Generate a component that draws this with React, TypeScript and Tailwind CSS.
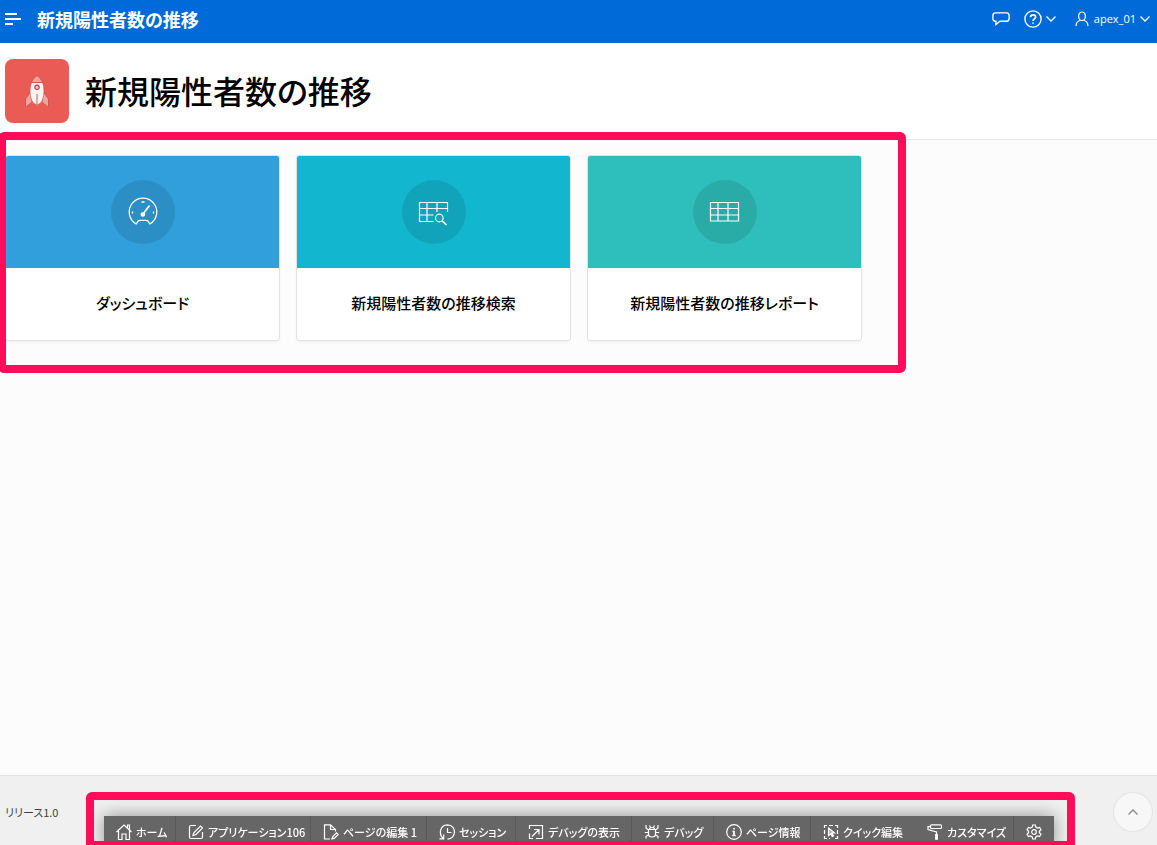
import React from 'react';

interface IconProps {
  className?: string;
}

interface CardItem {
  title: string;
  color: string;
  icon: React.ReactNode;
}

interface ToolbarItem {
  label: string;
  width: string;
  icon: React.ReactNode;
}

// Base for the 16px line icons
const LineIcon: React.FC<IconProps & { children: React.ReactNode }> = ({ className = 'size-4', children }) => (
  <svg viewBox="0 0 16 16" fill="none" stroke="currentColor" strokeWidth="1.2" className={`${className} shrink-0`} aria-hidden="true">
    {children}
  </svg>
);

const ChevronIcon = () => (
  <svg viewBox="0 0 10 6" fill="none" stroke="currentColor" strokeWidth="1.3" className="w-[10px] h-[6px] shrink-0" aria-hidden="true">
    <path d="M0.5 0.5 5 5 9.5 0.5" />
  </svg>
);

const RocketIcon = () => (
  <svg viewBox="0 0 32 40" className="w-8 h-10" aria-hidden="true">
    <path d="M9.500 21 4.500 28V35.500H5.500L10.500 31.500M22.500 21 27.500 28V35.500H26.500L21.500 31.500" fill="#f2a39f" stroke="#c14c48" strokeWidth="0.8" />
    <path d="M10.500 11.500C8.500 16.500 8.500 23.500 10.500 28.500C11.500 31.500 13.500 33.500 16 33.500C18.500 33.500 20.500 31.500 21.500 28.500C23.500 23.500 23.500 16.500 21.500 11.500Z" fill="#faf3f2" stroke="#b9514d" strokeWidth="0.6" />
    <path d="M10.500 11.500C11.500 8.500 13.500 6.200 16 4.500C18.500 6.200 20.500 8.500 21.500 11.500Z" fill="#f2a39f" stroke="#c14c48" strokeWidth="0.8" />
    <circle cx="16" cy="16.300" r="2.200" fill="#f5c5c2" stroke="#b4413e" strokeWidth="1.1" />
    <path d="M16 23V35" stroke="#e08480" strokeWidth="1.400" />
  </svg>
);

const GaugeIcon = () => (
  <svg viewBox="0 0 32 32" fill="none" stroke="currentColor" strokeWidth="1.3" className="size-8" aria-hidden="true">
    <path d="M9.200 28A13.800 13.800 0 1 1 22.800 28L20.800 25C20.300 24.500 19.700 24.300 19 24.300H13C12.300 24.300 11.700 24.500 11.200 25Z" />
    <path d="M16 18 22.500 9.500" strokeWidth="1.700" />
    <circle cx="15.800" cy="18.500" r="2.300" fill="currentColor" stroke="none" />
    <path d="M14.500 6h3M5.500 15.500v2M26.500 15.500v2" strokeWidth="1.400" />
  </svg>
);

const TableSearchIcon = () => (
  <svg viewBox="0 0 32 32" fill="none" stroke="currentColor" strokeWidth="1.200" className="size-8" aria-hidden="true">
    <path d="M15.500 25.500H1.500V6.500H29.500V16M1.500 12.500H29.500M1.500 19H15.500M9 6.500V25.500M19 6.500V16" />
    <circle cx="21.300" cy="22" r="3.800" />
    <path d="M24 24.800 28.500 29" strokeWidth="1.500" />
  </svg>
);

const TableIcon = () => (
  <svg viewBox="0 0 32 32" fill="none" stroke="currentColor" strokeWidth="1.200" className="size-8" aria-hidden="true">
    <path d="M1.500 6.500H29.500V25H1.500ZM1.500 12.500H29.500M1.500 19H29.500M9 6.500V25M19 6.500V25" />
  </svg>
);

const cards: CardItem[] = [
  { title: 'ダッシュボード', color: 'bg-[#309fdb]', icon: <GaugeIcon /> },
  { title: '新規陽性者数の推移検索', color: 'bg-[#13b6cf]', icon: <TableSearchIcon /> },
  { title: '新規陽性者数の推移レポート', color: 'bg-[#2ebfbc]', icon: <TableIcon /> },
];

const toolbarItems: ToolbarItem[] = [
  {
    label: 'ホーム',
    width: 'w-[72px] border-r',
    icon: (
      <LineIcon>
        <path d="M0.500 8 8 1 15.500 8M2.500 6.500V15.500H6V10H10V15.500H13.500V6.500M11.500 4V1H13.500V6" />
      </LineIcon>
    ),
  },
  {
    label: 'アプリケーション106',
    width: 'w-[135px] border-r',
    icon: (
      <LineIcon>
        <path d="M8 1.500H3Q1.500 1.500 1.500 3V13Q1.500 14.500 3 14.500H13Q14.500 14.500 14.500 13V8M5 11.500 6 8.500 12.500 2 14.500 4 8 10.500Z" />
      </LineIcon>
    ),
  },
  {
    label: 'ページの編集 1',
    width: 'w-[116px] border-r',
    icon: (
      <LineIcon>
        <path d="M7 15H1.500V0.800H7.500L12.500 5.500V7.500M7.500 0.800V5.500H12.500" />
        <path d="M9 14.800 9.800 12.500 13.500 8.800 15.200 10.500 11.500 14.200Z" />
      </LineIcon>
    ),
  },
  {
    label: 'セッション',
    width: 'w-[89px] border-r',
    icon: (
      <LineIcon>
        <path d="M4.500 14.500C-0.500 11 0.500 1 8.500 0.800C18 1 17.500 15 8.500 15.200M8.500 4V8.500H12.500M0.500 14.800H4.700V10.500" />
      </LineIcon>
    ),
  },
  {
    label: 'デバッグの表示',
    width: 'w-[116px] border-r',
    icon: (
      <LineIcon>
        <path d="M1.500 5V1.500H14.500V14.500H8M6 5.500H11V10.500M10.500 6 4 12.500M1.500 9.500V14.500H5" />
      </LineIcon>
    ),
  },
  {
    label: 'デバッグ',
    width: 'w-[82px] border-r',
    icon: (
      <LineIcon>
        <path d="M5.500 5.500C5.500 2.800 10.500 2.800 10.500 5.500M4.500 5.500H11.500V10C11.500 14 4.500 14 4.500 10ZM2 1V4L4.500 6M14 1V4L11.500 6M0.800 8.500H4.500M11.500 8.500H15.200M2 14.500V12.500L4.500 10.800M14 14.500V12.500L11.500 10.800M6.500 3.500 5.500 1.500M9.500 3.500 10.500 1.500" />
      </LineIcon>
    ),
  },
  {
    label: 'ページ情報',
    width: 'w-[97px] border-r',
    icon: (
      <LineIcon>
        <circle cx="8" cy="8" r="7.300" />
        <path d="M8 4V5.600M6.500 7.500H8V11.500M6.300 11.500H9.700" strokeWidth="1.700" />
      </LineIcon>
    ),
  },
  {
    label: 'クイック編集',
    width: 'w-[104px]',
    icon: (
      <LineIcon>
        <path d="M1.500 4V1.500H4M6 1.500H10M12 1.500H14.500V4M14.500 6V10M14.500 12V14.500H12M4 14.500H1.500V12M1.500 10V6M6 14.500H7" />
        <path d="M5.500 4 11.500 9H9L10.500 12L9.200 12.500 8 9.800 5.500 11.500Z" fill="currentColor" fillOpacity="0.5" />
      </LineIcon>
    ),
  },
  {
    label: 'カスタマイズ',
    width: 'w-[99px] border-r',
    icon: (
      <LineIcon>
        <path d="M4.500 0.800H13.500Q14.500 0.800 14.500 1.800V3.500Q14.500 4.500 13.500 4.500H4.500Q3.500 4.500 3.500 3.500V1.800Q3.500 0.800 4.500 0.800ZM3.500 2.600H1V5.500L9.500 8V10.500" />
        <path d="M8.700 10.500H10.300V15.200H8.700Z" fill="currentColor" />
      </LineIcon>
    ),
  },
];

const Header = () => (
  <header className="h-[43px] shrink-0 bg-[#006bd8] text-white flex items-center justify-between pl-[5px] pr-[7px] pb-1.5">
    <div className="flex items-center gap-4">
      <button type="button" aria-label="ナビゲーション" className="cursor-pointer">
        <LineIcon>
          <path d="M0 3H12M0 8H16M0 13H8" strokeWidth="2" />
        </LineIcon>
      </button>
      <a href="#" className="text-lg leading-6 font-bold">新規陽性者数の推移</a>
    </div>
    <div className="flex items-center">
      <button type="button" aria-label="フィードバック" className="mr-[14px] cursor-pointer">
        <LineIcon className="w-[18px] h-[18px]">
          <path d="M3 2.500H13Q15.200 2.500 15.200 5V7.500Q15.200 10 13 10H7L3.500 13V10H3Q0.800 10 0.800 7.500V5Q0.800 2.500 3 2.500Z" />
        </LineIcon>
      </button>
      <button type="button" aria-label="ヘルプ" className="mr-[18px] flex items-center gap-1 cursor-pointer">
        <LineIcon className="w-[18px] h-[18px]">
          <circle cx="8" cy="8" r="7.200" />
          <path d="M5.800 6.500C5.800 3.500 10.300 3.700 10.300 6.300C10.300 7.900 8 7.900 8 9.800M8 11V12.300" strokeWidth="1.500" />
        </LineIcon>
        <ChevronIcon />
      </button>
      <button type="button" className="flex items-center gap-1 cursor-pointer">
        <LineIcon>
          <path d="M8 1C12.800 1 12.200 9.500 8 9.500C3.800 9.500 3.200 1 8 1ZM6 9.500C3.500 10 2.200 11.500 2 15M10 9.500C12.500 10 13.800 11.500 14 15" />
        </LineIcon>
        <span className="text-[11px] leading-4 font-medium font-['Open_Sans',sans-serif]">apex_01</span>
        <ChevronIcon />
      </button>
    </div>
  </header>
);

const DeveloperToolbar = () => (
  <div className="fixed inset-x-0 bottom-0 flex justify-center pl-1 pointer-events-none">
    <div className="h-[53px] overflow-hidden rounded-t-md border-x-8 border-t-8 border-b-4 border-[#ff0d5b] pt-4 pl-[10px] pr-[13px]">
      <nav className="flex h-8 bg-[#666] text-white shadow-[0_0_18px_rgba(0,0,0,0.4)] pointer-events-auto">
        {toolbarItems.map((item) => (
          <button
            key={item.label}
            type="button"
            className={`${item.width} shrink-0 flex items-center gap-1 pl-3 border-[#595959] text-[11px] leading-4 font-medium whitespace-nowrap cursor-pointer`}
          >
            {item.icon}
            {item.label}
          </button>
        ))}
        <button type="button" aria-label="オプション" className="w-10 flex items-center justify-center cursor-pointer">
          <LineIcon>
            <path d="M6.700 1H9.300L9.800 3.100L11.500 4.100L13.600 3.400L15 5.800L13.400 7.200V8.800L15 10.200L13.600 12.600L11.500 11.900L9.800 12.900L9.300 15H6.700L6.200 12.900L4.500 11.900L2.400 12.600L1 10.200L2.600 8.800V7.200L1 5.800L2.400 3.400L4.500 4.100L6.200 3.100Z" />
            <circle cx="8" cy="8" r="2.300" />
          </LineIcon>
        </button>
      </nav>
    </div>
  </div>
);

export default function App() {
  return (
    <div className="min-h-screen flex flex-col bg-[#fcfcfc] text-black font-['Noto_Sans_CJK_JP',sans-serif] [font-feature-settings:'palt']">
      <Header />

      {/* Page title */}
      <div className="flex items-center gap-4 bg-white border-b border-[#e2e2e2] px-[5px] py-4">
        <div className="size-16 rounded-lg bg-[#ea5b55] flex items-center justify-center">
          <RocketIcon />
        </div>
        <h1 className="text-[32px] leading-10 font-medium pb-0.5">新規陽性者数の推移</h1>
      </div>

      <main className="grow">
        <div className="relative">
          <div className="grid grid-cols-4 gap-4 pl-[5px] pr-1 pt-[15px] pb-6">
            {cards.map((card) => (
              <a
                key={card.title}
                href="#"
                className="flex flex-col overflow-hidden rounded-[3px] border border-[#e2e2e2] bg-white shadow-[0_2px_4px_-2px_rgba(0,0,0,0.1)]"
              >
                <div className={`${card.color} h-28 flex items-center justify-center`}>
                  <div className="size-16 rounded-full bg-black/10 text-white flex items-center justify-center">
                    {card.icon}
                  </div>
                </div>
                <h3 className="h-[72px] flex items-center justify-center pb-0.5 text-[15px] leading-6 font-medium">{card.title}</h3>
              </a>
            ))}
          </div>
          {/* Highlight around the cards */}
          <div className="absolute -top-2 -bottom-2 -left-[2px] right-[calc(25%-38px)] border-8 border-[#ff0d5b] rounded-md pointer-events-none" />
        </div>
      </main>

      <footer className="h-[70px] shrink-0 flex items-center justify-between bg-[#f0f0f0] border-t border-[#e2e2e2] pl-[5px] pr-1 pt-0.5">
        <span className="text-[11px] leading-4 text-[#404040]">リリース1.0</span>
        <button
          type="button"
          aria-label="トップに戻る"
          className="size-10 rounded-full border border-[#e2e2e2] bg-[#f7f7f7] text-[#888] flex items-center justify-center cursor-pointer"
        >
          <span className="rotate-180">
            <ChevronIcon />
          </span>
        </button>
      </footer>

      <DeveloperToolbar />
    </div>
  );
}
